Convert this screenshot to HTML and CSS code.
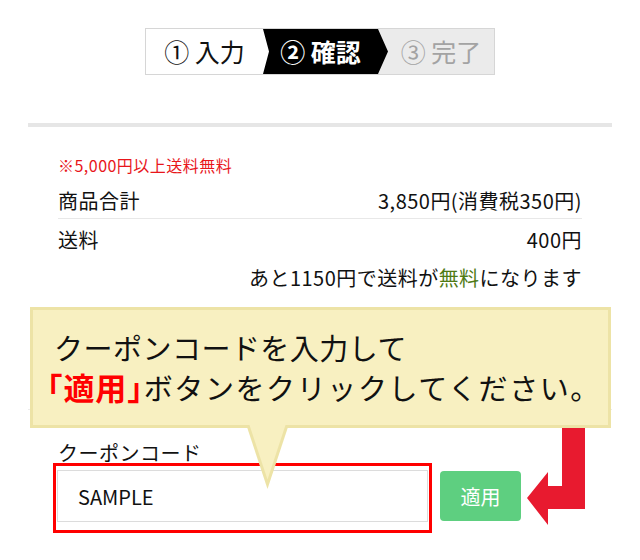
FILE: index.html
```html
<!DOCTYPE html>
<html lang="ja">
<head>
    <meta charset="UTF-8">
    <meta name="viewport" content="width=device-width, initial-scale=1.0">
    <title>ご注文内容の確認</title>
    <link rel="stylesheet" href="styles.css">
</head>
<body>
    <div class="page">
        <!-- ステップ表示 -->
        <ol class="steps">
            <li class="step step-done">① 入力</li>
            <li class="step step-current">② 確認</li>
            <li class="step step-next">③ 完了</li>
        </ol>

        <section class="cart">
            <div class="summary">
                <p class="note">※5,000円以上送料無料</p>
                <div class="row row-line">
                    <span>商品合計</span>
                    <span>3,850円(消費税350円)</span>
                </div>
                <div class="row">
                    <span>送料</span>
                    <span>400円</span>
                </div>
                <p class="hint">あと1150円で送料が<span class="free">無料</span>になります</p>
            </div>

            <div class="coupon">
                <label for="coupon">クーポンコード</label>
                <div class="coupon-form">
                    <div class="coupon-mark">
                        <input type="text" id="coupon" value="SAMPLE">
                    </div>
                    <button type="button">適用</button>
                </div>
            </div>
        </section>

        <!-- 吹き出し -->
        <div class="callout">
            <p>クーポンコードを入力して</p>
            <p class="callout-second"><strong>「適用」</strong>ボタンをクリックしてください。</p>
            <svg class="callout-tail" width="46" height="70" viewBox="0 0 46 70">
                <polygon points="2,5 43,5 22.5,67" fill="#ede3a6"/>
                <polygon points="3.5,0 41.5,0 22.5,57.5" fill="#f8f0c1"/>
            </svg>
        </div>

        <svg class="pointer" width="62" height="100" viewBox="0 0 62 100">
            <path d="M37 0 H60 V81 H23 V97 L2 70 L23 44 V58 H37 Z" fill="#e81a2f"/>
        </svg>
    </div>
</body>
</html>
```

FILE: styles.css
```css
/* 全体 */
body {
    margin: 0;
    background: #fff;
    color: #111;
    font-family: "Noto Sans CJK JP", "Noto Sans", sans-serif;
    letter-spacing: 0.03em;
}

.page {
    position: relative;
    width: 640px;
    height: 560px;
    overflow: hidden;
}

p {
    margin: 0;
}

/* ステップ */
.steps {
    display: flex;
    box-sizing: border-box;
    width: 350px;
    height: 47px;
    margin: 28px auto 0;
    padding: 0;
    list-style: none;
    border: 1px solid #d6d6d6;
    font-size: 25px;
    line-height: 45px;
    letter-spacing: 0;
}

.step {
    text-align: center;
    white-space: nowrap;
}

.step-done {
    width: 117px;
    color: #111;
}

.step-current {
    position: relative;
    z-index: 1;
    width: 125px;
    margin-right: -10px;
    padding-right: 10px;
    box-sizing: border-box;
    background: #000;
    color: #fff;
    font-weight: bold;
    clip-path: polygon(0 0, calc(100% - 10px) 0, 100% 50%, calc(100% - 10px) 100%, 0 100%, 6px 50%);
}

.step-next {
    flex: 1;
    padding-left: 10px;
    background: #ebebeb;
    color: #a3a3a3;
}

/* カート */
.cart {
    margin: 48px 28px 0;
    border-top: 4px solid #e6e6e6;
}

.summary {
    padding: 26px 30px 116px;
    border-bottom: 1px solid #ececec;
}

.note {
    font-size: 16px;
    line-height: 24px;
    color: #e8161b;
}

.row {
    display: flex;
    justify-content: space-between;
    font-size: 20px;
    line-height: 30px;
    padding: 6px 0 4px;
}

.row-line {
    padding: 9px 0 2px;
    border-bottom: 1px solid #e8e8e8;
}

.hint {
    padding-top: 4px;
    font-size: 20px;
    line-height: 30px;
    text-align: right;
}

.free {
    color: #4f7a14;
}

/* クーポン */
.coupon {
    padding: 32px 30px 0;
}

.coupon label {
    display: block;
    font-size: 20px;
    line-height: 22px;
}

.coupon-form {
    display: flex;
    align-items: flex-start;
    margin-top: -1px;
}

.coupon-mark {
    width: 371px;
    margin-left: -5px;
    padding: 4px 1px 8px;
    border: 3px solid #ff0000;
}

.coupon-mark input {
    display: block;
    box-sizing: border-box;
    width: 100%;
    height: 52px;
    padding: 0 20px;
    border: 1px solid #dcdcdc;
    font-family: inherit;
    font-size: 20px;
    letter-spacing: 0;
    color: #111;
    outline: none;
}

.coupon-form button {
    width: 81px;
    height: 50px;
    margin: 8px 0 0 8px;
    border: none;
    border-radius: 4px;
    background: #5ecf80;
    color: #fff;
    font-family: inherit;
    font-size: 20px;
    cursor: pointer;
}

/* 吹き出し */
.callout {
    position: absolute;
    top: 307px;
    left: 30px;
    box-sizing: border-box;
    width: 581px;
    height: 121px;
    padding: 17px 0 0 21px;
    background: #f8f0c1;
    border: 3px solid #ede3a6;
    font-size: 29px;
    line-height: 40px;
}

.callout-second {
    margin-left: -7px;
    letter-spacing: 0.055em;
}

.callout strong {
    color: #ff0000;
    font-size: 31px;
    letter-spacing: 0.03em;
    font-feature-settings: "halt";
}

.callout-tail {
    position: absolute;
    left: 212px;
    top: 112px;
}

.pointer {
    position: absolute;
    left: 525px;
    top: 428px;
}
```
